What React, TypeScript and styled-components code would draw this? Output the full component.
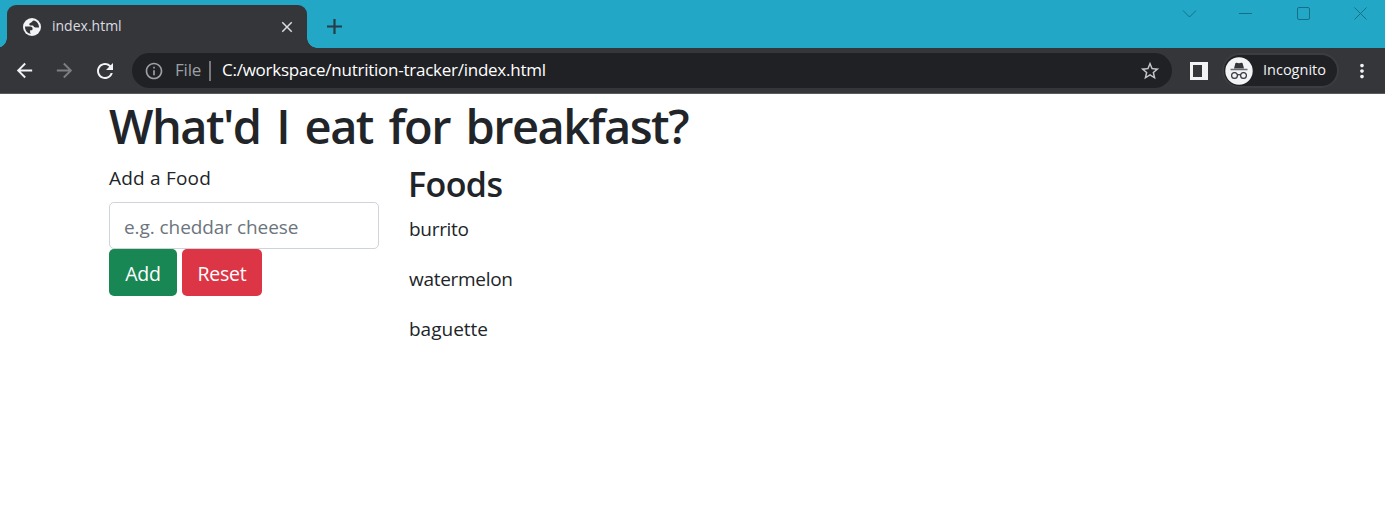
import React from "react";
import styled, { createGlobalStyle } from "styled-components";
import { MdArrowBack, MdArrowForward, MdRefresh, MdInfoOutline, MdStarBorder, MdMoreVert, MdClose } from "react-icons/md";

const Global = createGlobalStyle`
  * { box-sizing: border-box; }
  body { margin: 0; background: #fff; color: #212529; font-family: "Open Sans", "Noto Sans", sans-serif; overflow: hidden; }
  h1, h2, p { margin: 0; }
  svg { display: block; flex: none; }
`;
const Window = styled.div`width: 1385px; height: 531px; display: flex; flex-direction: column;`;
const TabStrip = styled.header`height: 48px; background: #22a7c6; display: flex; align-items: flex-start;`;
const Tab = styled.div`
  position: relative; margin: 5px 0 0 7px; width: 300px; height: 43px; padding: 0 11px 0 16px;
  display: flex; align-items: center; background: #35363a; border-radius: 9px 9px 0 0; color: #dadce0;
  &::before, &::after { content: ""; position: absolute; bottom: 0; width: 10px; height: 10px; }
  &::before { left: -10px; background: radial-gradient(circle at 0 0, transparent 9.5px, #35363a 10px); }
  &::after { right: -10px; background: radial-gradient(circle at 100% 0, transparent 9.5px, #35363a 10px); }
`;
const Text = styled.span<{ $size: number; $spacing?: number; $color?: string }>`
  font-size: ${p => p.$size}px; letter-spacing: ${p => p.$spacing ?? 0}px; color: ${p => p.$color ?? "inherit"};
  white-space: nowrap; line-height: 1.3;
`;
const TabTitle = styled(Text)`margin-left: 11px; flex: 1;`;
const NewTab = styled.div`margin: 19px 0 0 20px;`;
const WindowControls = styled.div`margin-left: auto; padding: 6px 17px 0 0; display: flex; gap: 42px;`;
const Toolbar = styled.nav`
  height: 46px; background: #35363a; border-bottom: 1px solid #5a5b5f; color: #f1f3f4;
  display: flex; align-items: center; padding: 0 12px 0 13px;
`;
const NavButtons = styled.div`display: flex; gap: 17px; align-items: center;`;
const Forward = styled.span`color: #7d7e82;`;
const Address = styled.div`
  margin-left: 15px; width: 1040px; height: 35px; border-radius: 18px; background: #202124;
  display: flex; align-items: center; padding: 0 11px 0 12px;
`;
const Info = styled.span`color: #9aa0a6; margin-right: 11px;`;
const Divider = styled.i`width: 2px; height: 20px; background: #77797d; margin: 0 11px 0 9px;`;
const Scheme = styled(Text)`width: 25px;`;
const Star = styled.span`margin-left: auto; color: #c5c7ca;`;
const SidePanel = styled.div`width: 18px; height: 18px; background: #f1f3f4; margin-left: 18px; padding: 3px 6px 3px 3px;`;
const PanelInner = styled.div`height: 12px; background: #35363a;`;
const Profile = styled.div`
  margin-left: 14px; width: 117px; height: 35px; border: 2px solid #3c3d41; border-radius: 18px; background: #202124;
  display: flex; align-items: center; padding-left: 1px; gap: 10px;
`;
const Menu = styled.span`margin-left: auto;`;
const Page = styled.main`padding: 2px 109px 0;`;
const Title = styled.h1`
  font-size: 47px; font-weight: 560; line-height: 60px; letter-spacing: -1.55px; word-spacing: 5px; white-space: nowrap;
`;
const Columns = styled.div`display: flex; gap: 30px; margin-top: 7px;`;
const Form = styled.form`width: 270px;`;
const Label = styled.label`display: block; font-size: 19px; line-height: 30px; margin-bottom: 9px; letter-spacing: 0.2px;`;
const Input = styled.input`
  display: block; width: 270px; height: 47px; border: 1px solid #ced4da; border-radius: 5px; padding: 3px 14px 0;
  font: 19px "Open Sans", sans-serif; letter-spacing: -0.07px;
  &::placeholder { color: #6c757d; opacity: 1; }
`;
const Buttons = styled.div`display: flex; gap: 5px;`;
const Button = styled.button<{ $color: string; $width: number }>`
  width: ${p => p.$width}px; height: 47px; padding: 2px 0 0; border: 0; border-radius: 5px; background: ${p => p.$color};
  color: #fff; font: 19.5px "Open Sans", sans-serif; letter-spacing: -0.2px;
`;
const Foods = styled.section`min-width: 0;`;
const Heading = styled.h2`font-size: 34px; font-weight: 560; line-height: 42px; margin: 0 0 9px -1px; letter-spacing: -0.6px;`;
const Food = styled.p<{ $spacing: number }>`font-size: 19px; line-height: 30px; margin-bottom: 20px; letter-spacing: ${p => p.$spacing}px;`;

const foods = [
  { name: "burrito", spacing: -0.3 },
  { name: "watermelon", spacing: -0.3 },
  { name: "baguette", spacing: 0 },
];

const Globe = () => (
  <svg width="18" height="18" viewBox="0 0 18 18">
    <circle cx="9" cy="9" r="9" fill="#f1f3f4" />
    <path d="M2 8.600h5.200c1.600 0 2.400 1 2.400 2.200 0 1-.6 1.500-1.600 1.500h-.9v2c0 .6.300 1.100.9 1.500C4.700 15.600 2 12.700 2 9ZM11 2.400C9.500 2.300 9.400 3.500 8.500 4.200 7.600 4.800 6.300 4.900 6.300 6.200c0 1 .9 1.300 2 1.300h1.500c.8 0 .8 1.500 1.900 1.800 1.300.4 2.700.1 4.300.1.200-3.200-1.900-6-5-7Z" fill="#35363a" />
  </svg>
);
const Incognito = () => (
  <svg width="28" height="28" viewBox="0 0 28 28">
    <circle cx="14" cy="14" r="13.7" fill="#f1f3f4" />
    <path d="M9 11.500 10.300 6.400q.3-1 1.200-.7L14 6.300l2.500-.6q.9-.3 1.200.7l1.300 5.100Z" fill="#35363a" />
    <path d="M5.500 12.500h17" stroke="#6b6c70" strokeWidth="1.500" />
    <g fill="none" stroke="#35363a" strokeWidth="1.200"><circle cx="9.500" cy="18.500" r="2.900" /><circle cx="18.500" cy="18.500" r="2.900" /><path d="M12.400 18q1.600-.8 3.200 0" /></g>
  </svg>
);
const ControlIcon = ({ d }: { d: string }) => (
  <svg width="15" height="15" viewBox="0 0 15 15" fill="none" stroke="#176f84" strokeWidth="1"><path d={d} /></svg>
);

export default function App() {
  return <><Global /><Window>
    <TabStrip>
      <Tab><Globe /><TabTitle $size={14}>index.html</TabTitle><MdClose size={18} /></Tab>
      <NewTab><svg width="15" height="15" viewBox="0 0 15 15"><path d="M7.500 0v15M0 7.500h15" stroke="#263d46" strokeWidth="2.200" /></svg></NewTab>
      <WindowControls>
        <ControlIcon d="M1 4.500 7.500 11 14 4.500" /><ControlIcon d="M0 7.500h13" />
        <ControlIcon d="M3 1.500h9q1.500 0 1.500 1.500v9q0 1.500-1.500 1.500H3q-1.500 0-1.500-1.500V3q0-1.500 1.500-1.500" /><ControlIcon d="m1.500 1.500 12 12m0-12-12 12" />
      </WindowControls>
    </TabStrip>
    <Toolbar>
      <NavButtons><MdArrowBack size={23} /><Forward><MdArrowForward size={23} /></Forward><MdRefresh size={24} /></NavButtons>
      <Address><Info><MdInfoOutline size={20} /></Info><Scheme $size={17} $color="#9aa0a6" $spacing={-0.2}>File</Scheme><Divider />
        <Text $size={17} $spacing={-0.25} $color="#fff">C:/workspace/nutrition-tracker/index.html</Text><Star><MdStarBorder size={22} /></Star></Address>
      <SidePanel><PanelInner /></SidePanel>
      <Profile><Incognito /><Text $size={14.5}>Incognito</Text></Profile>
      <Menu><MdMoreVert size={22} /></Menu>
    </Toolbar>
    <Page>
      <Title>What'd I eat for breakfast?</Title>
      <Columns>
        <Form onSubmit={e => e.preventDefault()}>
          <Label htmlFor="food">Add a Food</Label>
          <Input id="food" placeholder="e.g. cheddar cheese" />
          <Buttons><Button $color="#198754" $width={68}>Add</Button><Button $color="#dc3545" $width={80}>Reset</Button></Buttons>
        </Form>
        <Foods><Heading>Foods</Heading>{foods.map(f => <Food key={f.name} $spacing={f.spacing}>{f.name}</Food>)}</Foods>
      </Columns>
    </Page>
  </Window></>;
}
